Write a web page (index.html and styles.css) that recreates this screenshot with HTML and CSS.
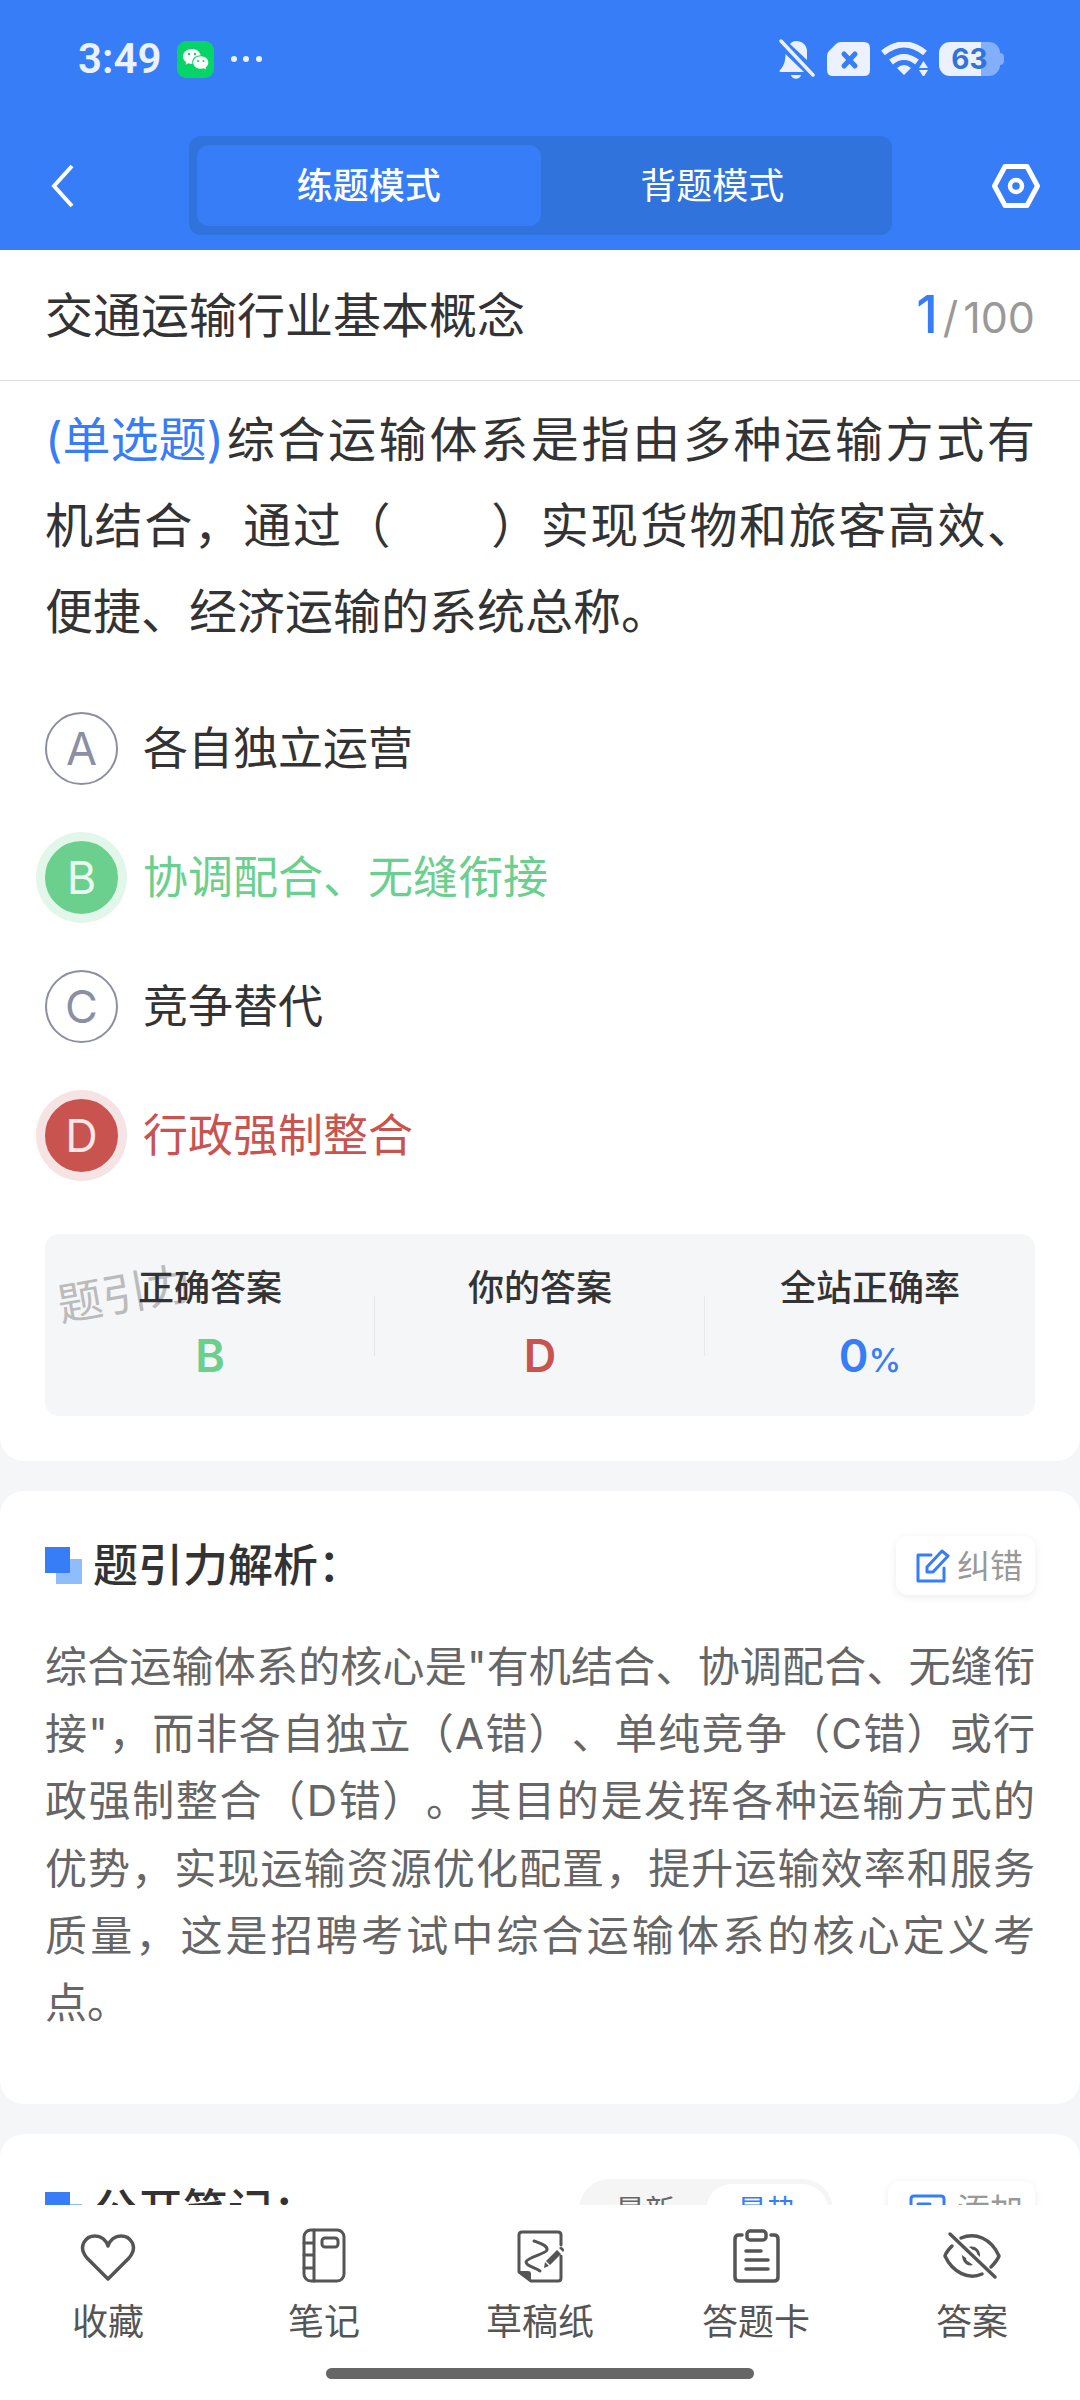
FILE: index.html
```html
<!DOCTYPE html>
<html lang="zh-CN">
<head>
  <meta charset="UTF-8">
  <title>练题模式</title>
  <meta name="viewport" content="width=device-width, initial-scale=1.0">
  <link rel="stylesheet" href="styles.css">
</head>
<body>
  <header class="header">
    <div class="status-bar">
      <span class="time">3:49</span>
      <svg class="wechat" width="37" height="37" viewBox="0 0 37 37">
        <rect width="37" height="37" rx="9" fill="#07d466"/>
        <path fill="#fff" d="M15 8c-5.200 0-9 3.300-9 7.500 0 2.400 1.200 4.300 3.200 5.700l-.8 2.600 3-1.500c1.200.4 2.600.6 4 .6-1.200-5 3-8.700 8.300-8.600C23 10.500 19.400 8 15 8z"/>
        <path fill="#fff" d="M23.800 15.300c-4.400 0-7.600 2.800-7.600 6.200s3.200 6.300 7.600 6.300c1 0 2-.2 2.900-.5l2.400 1.300-.6-2.200c1.800-1.200 2.800-2.900 2.800-4.900 0-3.400-3.100-6.200-7.500-6.200z"/>
        <g fill="#07d466"><circle cx="12" cy="13" r="1.200"/><circle cx="18" cy="13" r="1.200"/><circle cx="21" cy="20" r="1"/><circle cx="26.500" cy="20" r="1"/></g>
      </svg>
      <svg class="dots" width="32" height="8" viewBox="0 0 32 8" fill="#ebf1fe">
        <circle cx="3" cy="4" r="3"/><circle cx="15" cy="4" r="3"/><circle cx="28" cy="4" r="3"/>
      </svg>
      <div class="status-icons">
        <svg width="37" height="40" viewBox="0 0 37 40" fill="#ebf1fe">
          <path d="M11 5c1.500-2 4-3 6-3 6 0 11 4 11 10v9L11 5zM6.500 15 25 33H1c-1-1 0-2 1-3 3-4 4.500-8 4.500-15zM12 36h10c-1 5-9 5-10 0z"/>
          <path d="M4 2 36 36" stroke="#377df7" stroke-width="4"/>
          <path d="M2 2 34 36" stroke="#ebf1fe" stroke-width="3.500" stroke-linecap="round"/>
        </svg>
        <svg width="43" height="34" viewBox="0 0 43 34">
          <path fill="#ebf1fe" d="M14 0h23q6 0 6 6v22q0 6-6 6H6q-6 0-6-6V14q0-3 2-5l7-7q2-2 5-2z"/>
          <path stroke="#377df7" stroke-width="5" stroke-linecap="round" d="m17 12 11 12M28 12 17 24"/>
        </svg>
        <svg width="47" height="34" viewBox="0 0 47 34" fill="none" stroke="#ebf1fe" stroke-width="6">
          <path d="M2 11q21-17 42 0M10 20q13-10 26 0"/>
          <path fill="#ebf1fe" stroke="none" d="M16 26q7-6 14 0l-7 7zM38 26l4.500-7 4.500 7zM38 28h9l-4.500 7z"/>
        </svg>
        <div class="battery">63</div>
      </div>
    </div>
    <nav class="nav">
      <button class="back" aria-label="返回">
        <svg width="24" height="44" viewBox="0 0 24 44" fill="none" stroke="#fff" stroke-width="4"><path d="M21 2 3 22l18 20"/></svg>
      </button>
      <div class="modes">
        <button class="mode active">练题模式</button>
        <button class="mode">背题模式</button>
      </div>
      <button class="settings" aria-label="设置">
        <svg width="50" height="46" viewBox="0 0 50 46" fill="none" stroke="#fff" stroke-width="5" stroke-linejoin="round">
          <path d="M14 3.500h22L46.500 23 36 42.500H14L3.500 23z"/><circle cx="25" cy="23" r="6" stroke-width="4.500"/>
        </svg>
      </button>
    </nav>
  </header>

  <div class="title-bar">
    <h1>交通运输行业基本概念</h1>
    <div class="counter"><b>1</b><span>/</span>100</div>
  </div>

  <main class="content">
    <section class="card question-card">
      <p class="question"><span class="type">(单选题)</span>综合运输体系是指由多种运输方式有机结合，通过（　　）实现货物和旅客高效、便捷、经济运输的系统总称。</p>

      <div class="options">
        <button class="option"><span class="letter">A</span>各自独立运营</button>
        <button class="option correct"><span class="letter">B</span>协调配合、无缝衔接</button>
        <button class="option"><span class="letter">C</span>竞争替代</button>
        <button class="option wrong"><span class="letter">D</span>行政强制整合</button>
      </div>

      <div class="result">
        <span class="watermark">题引力</span>
        <div class="result-item"><h3>正确答案</h3><p class="green">B</p></div>
        <div class="result-item"><h3>你的答案</h3><p class="red">D</p></div>
        <div class="result-item"><h3>全站正确率</h3><p class="blue">0<small>%</small></p></div>
      </div>
    </section>

    <section class="card analysis-card">
      <div class="card-head">
        <h2>题引力解析：</h2>
        <button class="small-button">
          <svg width="34" height="34" viewBox="0 0 34 34" fill="none" stroke="#377df7" stroke-width="3" stroke-linejoin="round" stroke-linecap="round">
            <path d="M15 6H2v26h26V19"/><path d="M11 18 26 2l6 5-15 16h-6z"/>
          </svg>
          纠错
        </button>
      </div>
      <p class="analysis">综合运输体系的核心是"有机结合、协调配合、无缝衔接"，而非各自独立（A错）、单纯竞争（C错）或行政强制整合（D错）。其目的是发挥各种运输方式的优势，实现运输资源优化配置，提升运输效率和服务质量，这是招聘考试中综合运输体系的核心定义考点。</p>
    </section>

    <section class="card notes-card">
      <div class="card-head">
        <h2>公开笔记：</h2>
        <div class="sort">
          <button>最新</button>
          <button class="active">最热</button>
        </div>
        <button class="small-button">
          <svg width="42" height="32" viewBox="0 0 42 32" fill="none" stroke="#377df7" stroke-width="3" stroke-linecap="round">
            <path d="M36 16V5q0-3-3-3H6Q3 2 3 5v22q0 3 3 3h14M10 10h12M10 17h8M31 20v10M26 25h10"/>
          </svg>
          添加
        </button>
      </div>
    </section>
  </main>

  <footer class="footer">
    <div class="tabs">
      <button>
        <svg width="56" height="56" viewBox="0 0 56 56" stroke-width="3.500"><path d="M28 51 7 30C-3 18 6 8 15 8c6 0 11 4 13 10 2-6 7-10 13-10 9 0 18 10 8 22z"/></svg>
        收藏
      </button>
      <button>
        <svg width="56" height="56" viewBox="0 0 56 56" stroke-width="3"><rect x="8" y="2" width="40" height="51" rx="7"/><path d="M18 2v51M8 15h10M8 27h10M8 40h10"/><rect x="26" y="10" width="16" height="9" rx="3"/></svg>
        笔记
      </button>
      <button>
        <svg width="56" height="56" viewBox="0 0 56 56" stroke-width="3">
          <path d="M49 17V7q0-3-3-3H10Q7 4 7 7v37l12 9h27q3 0 3-3V28"/>
          <path d="M22 13c8 3 14 5 13 9s-20 7-21 12c0 4 8 5 14 9"/>
          <path fill="#555" stroke="none" d="M7 43h9q3 0 3 3v8zM45 22l4 4-11 11-4-4zM47 20q2-2 4 0t0 4zM33 34l4 4-5 2z"/>
        </svg>
        草稿纸
      </button>
      <button>
        <svg width="56" height="56" viewBox="0 0 56 56" stroke-width="3.500"><path d="M14 7h-3q-4 0-4 4v38q0 4 4 4h35q4 0 4-4V11q0-4-4-4h-3M18 23h15M18 32h22M18 41h22"/><rect x="19" y="3" width="19" height="9" rx="3"/></svg>
        答题卡
      </button>
      <button>
        <svg width="58" height="56" viewBox="0 0 58 56" stroke-width="3.500">
          <path d="M7 6l45 43M18 10c14-6 30 0 38 18-2 5-5 8-8 11M9 18c-3 3-6 6-7 10 8 17 24 24 37 18"/>
          <path fill="#555" stroke="none" d="M26 19c6-2 12 3 11 10l-3-3c0-2-2-4-4-4zM19 27c0 7 5 12 11 10l-4-3c-2-1-3-2-3-4z"/>
        </svg>
        答案
      </button>
    </div>
    <div class="home-bar"></div>
  </footer>
</body>
</html>
```
FILE: styles.css
```css
* {
  box-sizing: border-box;
}

body {
  display: flex;
  flex-direction: column;
  height: 100vh;
  margin: 0;
  background: #f4f6f8;
  color: #333;
  font-family: Inter, "Noto Sans CJK SC", sans-serif;
  text-spacing-trim: space-all;
  text-autospace: no-autospace;
}

h1, h2, h3, p {
  margin: 0;
}

button {
  padding: 0;
  border: none;
  background: none;
  color: inherit;
  font-family: inherit;
  cursor: pointer;
}

svg {
  display: block;
  flex-shrink: 0;
}

/* header */
.header {
  background: #377df7;
  color: #fff;
  padding-bottom: 15px;
}

.status-bar {
  display: flex;
  align-items: center;
  height: 118px;
  padding: 0 76px 0 78px;
}

.time {
  color: #ebf1fe;
  font-family: Roboto, sans-serif;
  font-size: 42px;
  font-weight: 600;
  line-height: 48px;
}

.wechat {
  margin-left: 16px;
}

.dots {
  margin-left: 17px;
}

.status-icons {
  display: flex;
  align-items: center;
  gap: 11px;
  margin-left: auto;
}

.battery {
  position: relative;
  width: 61px;
  height: 34px;
  margin-right: 4px;
  border-radius: 11px;
  background: linear-gradient(to right, #ebf1fe 42px, #82aefa 42px);
  color: #3173dc;
  font-size: 28px;
  font-weight: 700;
  line-height: 34px;
  text-align: center;
}

.battery::after {
  content: "";
  position: absolute;
  left: 100%;
  top: 11px;
  width: 4px;
  height: 12px;
  border-radius: 0 4px 4px 0;
  background: #82aefa;
}

.nav {
  display: grid;
  grid-template-columns: 189px 1fr 188px;
  align-items: center;
  margin-top: 18px;
}

.back {
  padding-left: 51px;
}

.settings {
  display: flex;
  justify-content: flex-end;
  padding-right: 39px;
}

.modes {
  display: flex;
  padding: 9px 8px;
  border-radius: 12px;
  background: #3173dc;
}

.mode {
  flex: 1;
  height: 81px;
  border-radius: 12px;
  font-size: 36px;
  line-height: 54px;
}

.mode.active {
  background: #377df7;
  font-weight: 500;
}

/* title */
.title-bar {
  display: flex;
  align-items: center;
  justify-content: space-between;
  padding: 30px 45px 28px;
  border-bottom: 1px solid #ddd;
  background: #fff;
}

h1 {
  font-size: 48px;
  font-weight: 400;
  line-height: 72px;
}

.counter {
  display: flex;
  align-items: baseline;
  color: #999;
  font-size: 43px;
  line-height: 60px;
}

.counter b {
  color: #377df7;
  font-size: 52px;
  font-weight: 500;
}

.counter span {
  margin: 0 5px;
}

/* cards */
.content {
  flex: 1;
  min-height: 0;
  overflow-y: auto;
  scrollbar-width: none;
}

.card {
  margin-bottom: 30px;
  padding: 45px;
  border-radius: 24px;
  background: #fff;
}

.question-card {
  padding-top: 16px;
  border-radius: 0 0 24px 24px;
}

.question {
  font-size: 48px;
  line-height: 86px;
  text-align: justify;
}

.type {
  display: inline-block;
  color: #377df7;
}

.options {
  display: flex;
  flex-direction: column;
  gap: 56px;
  margin: 57px 0 62px;
}

.option {
  display: flex;
  align-items: center;
  gap: 25px;
  font-size: 45px;
  line-height: 73px;
  text-align: left;
}

.letter {
  width: 73px;
  height: 73px;
  border: 2px solid #8b8fa3;
  border-radius: 50%;
  color: #8b8fa3;
  line-height: 69px;
  text-align: center;
}

.correct {
  color: #6bcf8e;
}

.wrong {
  color: #c9534f;
}

.correct .letter {
  border-color: #6bcf8e;
  background: #6bcf8e;
  box-shadow: 0 0 0 9px #e2f7e9;
  color: #e8faef;
}

.wrong .letter {
  border-color: #c9534f;
  background: #c9534f;
  box-shadow: 0 0 0 9px #f6e3e3;
  color: #fae6e6;
}

.result {
  position: relative;
  display: flex;
  padding: 24px 0 22px;
  border-radius: 14px;
  background: #f4f6f8;
  text-align: center;
}

.result-item {
  position: relative;
  flex: 1;
}

.result-item + .result-item::before {
  content: "";
  position: absolute;
  left: -1px;
  top: 38px;
  width: 1px;
  height: 60px;
  background: #e6e8ea;
}

.result h3 {
  font-size: 36px;
  font-weight: 500;
  line-height: 60px;
}

.result p {
  font-size: 45px;
  font-weight: 600;
  line-height: 76px;
}

.result small {
  font-size: 33px;
  font-weight: 500;
  line-height: 40px;
}

.green {
  color: #6bcf8e;
}

.red {
  color: #c9534f;
}

.blue {
  color: #377df7;
}

.watermark {
  position: absolute;
  left: 12px;
  top: 30px;
  color: #bbb;
  font-size: 45px;
  line-height: 60px;
  transform: rotate(-10deg);
}

.card-head {
  display: flex;
  align-items: center;
}

.card-head h2 {
  display: flex;
  align-items: center;
  gap: 11px;
  margin-right: auto;
  font-size: 45px;
  font-weight: 500;
  line-height: 59px;
}

/* two overlapping squares */
.card-head h2::before {
  content: "";
  width: 37px;
  height: 37px;
  background:
    linear-gradient(#377df7, #377df7) 0 0 / 25px 26px no-repeat,
    linear-gradient(#8fbcfb, #8fbcfb) 100% 100% / 26px 25px no-repeat;
}

.small-button {
  display: flex;
  align-items: center;
  gap: 7px;
  height: 59px;
  padding: 0 12px 0 20px;
  border-radius: 12px;
  box-shadow: 0 2px 8px rgba(0, 0, 0, 0.08);
  color: #999;
  font-size: 33px;
  line-height: 48px;
}

.analysis-card {
  padding-bottom: 68px;
}

.analysis {
  margin-top: 38px;
  color: #666;
  font-size: 42px;
  line-height: 1.6;
  text-align: justify;
}

.sort {
  display: flex;
  margin-right: 55px;
  padding: 5px;
  border-radius: 31px;
  background: #f5f5f5;
  color: #666;
}

.sort button {
  width: 122px;
  height: 52px;
  border-radius: 26px;
  font-size: 30px;
  line-height: 44px;
}

.sort .active {
  background: #fff;
  color: #377df7;
}

/* footer */
.footer {
  padding: 23px 0 21px;
  background: #fff;
}

.tabs {
  display: flex;
}

.tabs button {
  flex: 1;
  display: flex;
  flex-direction: column;
  align-items: center;
  gap: 11px;
  color: #555;
  font-size: 36px;
  line-height: 54px;
}

.tabs svg {
  fill: none;
  stroke: #555;
  stroke-linecap: round;
  stroke-linejoin: round;
}

.home-bar {
  width: 428px;
  height: 11px;
  margin: 19px auto 0;
  border-radius: 6px;
  background: #666;
}
```
